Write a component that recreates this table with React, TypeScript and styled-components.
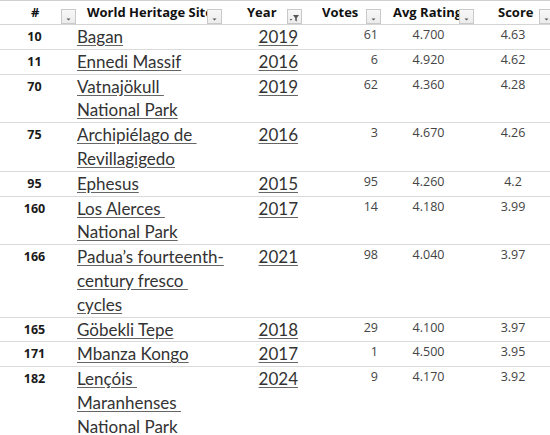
import React from "react";
import styled, { createGlobalStyle } from "styled-components";

const Global = createGlobalStyle`
  html, body { margin: 0; padding: 0; background: #ffffff; }
  body { overflow: hidden; width: 550px; height: 435px; }
`;

const COLS = "77px 146px 80px 79px 93px 80px";

const Sheet = styled.div`
  width: 555px;
  background: #fff;
  border-top: 1px solid #d0d0d0;
`;

const HeaderRow = styled.div`
  display: grid;
  grid-template-columns: ${COLS};
  height: 23px;
  border-bottom: 1px solid #d4d4d4;
`;

const HeadCell = styled.div`
  display: flex;
  align-items: flex-end;
  min-width: 0;
  padding-right: 1px;
`;

const HeadLabel = styled.div<{ $pad: number }>`
  flex: 1;
  min-width: 0;
  overflow: hidden;
  white-space: nowrap;
  padding-left: ${(p) => p.$pad}px;
  font-family: "Open Sans", "Noto Sans", sans-serif;
  font-weight: 700;
  font-size: 13px;
  line-height: 19px;
  color: #111;
  margin-bottom: 2px;
`;

const FilterBtn = styled.div`
  flex: 0 0 auto;
  width: 15px;
  height: 15px;
  box-sizing: border-box;
  border: 1px solid #c9c9c9;
  background: linear-gradient(#f7f7f7, #ececec);
  display: flex;
  align-items: flex-end;
  justify-content: center;
`;

const Row = styled.div`
  display: grid;
  grid-template-columns: ${COLS};
  border-bottom: 1px solid #dadada;
`;

const RankCell = styled.div`
  font-family: "Open Sans", "Noto Sans", sans-serif;
  font-weight: 700;
  font-size: 12.5px;
  line-height: 17px;
  color: #1a1a1a;
  text-align: center;
  padding: 3px 8px 0 0;
`;

const SiteCell = styled.div`
  font-family: Lato, "Noto Sans", sans-serif;
  font-size: 17px;
  line-height: 23.8px;
  color: #333;
`;

const SiteLine = styled.span`
  display: block;
  white-space: pre;
  text-decoration: underline;
  text-decoration-color: #666;
  text-underline-offset: 2px;
`;

const YearCell = styled.div`
  font-family: Lato, "Noto Sans", sans-serif;
  font-size: 17px;
  line-height: 23.8px;
  color: #333;
  text-align: right;
  padding-right: 5px;
  text-decoration: underline;
  text-decoration-color: #666;
  text-underline-offset: 2px;
`;

const NumCell = styled.div<{ $align: "right" | "center"; $pr: number }>`
  font-family: "Open Sans", "Noto Sans", sans-serif;
  font-size: 12.5px;
  line-height: 17px;
  color: #444;
  text-align: ${(p) => p.$align};
  padding: 1px ${(p) => p.$pr}px 0 0;
`;

const Arrow = () => (
  <svg width="7" height="6" viewBox="0 0 7 6">
    <path d="M1.5 1.5 L5.5 1.5 L3.5 3.5 Z" fill="#555" />
  </svg>
);

const Funnel = () => (
  <svg width="13" height="10" viewBox="0 0 13 10">
    <path d="M5 2 L11 2 L8.8 5 L8.8 8.5 L7.2 7.6 L7.2 5 Z" fill="#555" />
    <path d="M1.6 6 L4.4 6 L3 7.6 Z" fill="#555" />
  </svg>
);

type Site = {
  rank: number;
  name: string[];
  year: number;
  votes: number;
  avg: string;
  score: string;
};

const data: Site[] = [
  { rank: 10, name: ["Bagan"], year: 2019, votes: 61, avg: "4.700", score: "4.63" },
  { rank: 11, name: ["Ennedi Massif"], year: 2016, votes: 6, avg: "4.920", score: "4.62" },
  { rank: 70, name: ["Vatnajökull ", "National Park"], year: 2019, votes: 62, avg: "4.360", score: "4.28" },
  { rank: 75, name: ["Archipiélago de ", "Revillagigedo"], year: 2016, votes: 3, avg: "4.670", score: "4.26" },
  { rank: 95, name: ["Ephesus"], year: 2015, votes: 95, avg: "4.260", score: "4.2" },
  { rank: 160, name: ["Los Alerces ", "National Park"], year: 2017, votes: 14, avg: "4.180", score: "3.99" },
  { rank: 166, name: ["Padua’s fourteenth-", "century fresco ", "cycles"], year: 2021, votes: 98, avg: "4.040", score: "3.97" },
  { rank: 165, name: ["Göbekli Tepe"], year: 2018, votes: 29, avg: "4.100", score: "3.97" },
  { rank: 171, name: ["Mbanza Kongo"], year: 2017, votes: 1, avg: "4.500", score: "3.95" },
  { rank: 182, name: ["Lençóis ", "Maranhenses ", "National Park"], year: 2024, votes: 9, avg: "4.170", score: "3.92" },
];

const headers: { label: string; pad: number; funnel?: boolean }[] = [
  { label: "#", pad: 31 },
  { label: "World Heritage Site", pad: 10 },
  { label: "Year", pad: 24, funnel: true },
  { label: "Votes", pad: 19 },
  { label: "Avg Rating", pad: 11 },
  { label: "Score", pad: 23 },
];

export default function App() {
  return (
    <>
      <Global />
      <Sheet>
        <HeaderRow>
          {headers.map((h) => (
            <HeadCell key={h.label}>
              <HeadLabel $pad={h.pad}>{h.label}</HeadLabel>
              <FilterBtn>{h.funnel ? <Funnel /> : <Arrow />}</FilterBtn>
            </HeadCell>
          ))}
        </HeaderRow>
        {data.map((d) => (
          <Row key={d.rank}>
            <RankCell>{d.rank}</RankCell>
            <SiteCell>
              {d.name.map((l, i) => (
                <SiteLine key={i}>{l}</SiteLine>
              ))}
            </SiteCell>
            <YearCell>{d.year}</YearCell>
            <NumCell $align="right" $pr={4}>{d.votes}</NumCell>
            <NumCell $align="center" $pr={0}>{d.avg}</NumCell>
            <NumCell $align="center" $pr={4}>{d.score}</NumCell>
          </Row>
        ))}
      </Sheet>
    </>
  );
}
